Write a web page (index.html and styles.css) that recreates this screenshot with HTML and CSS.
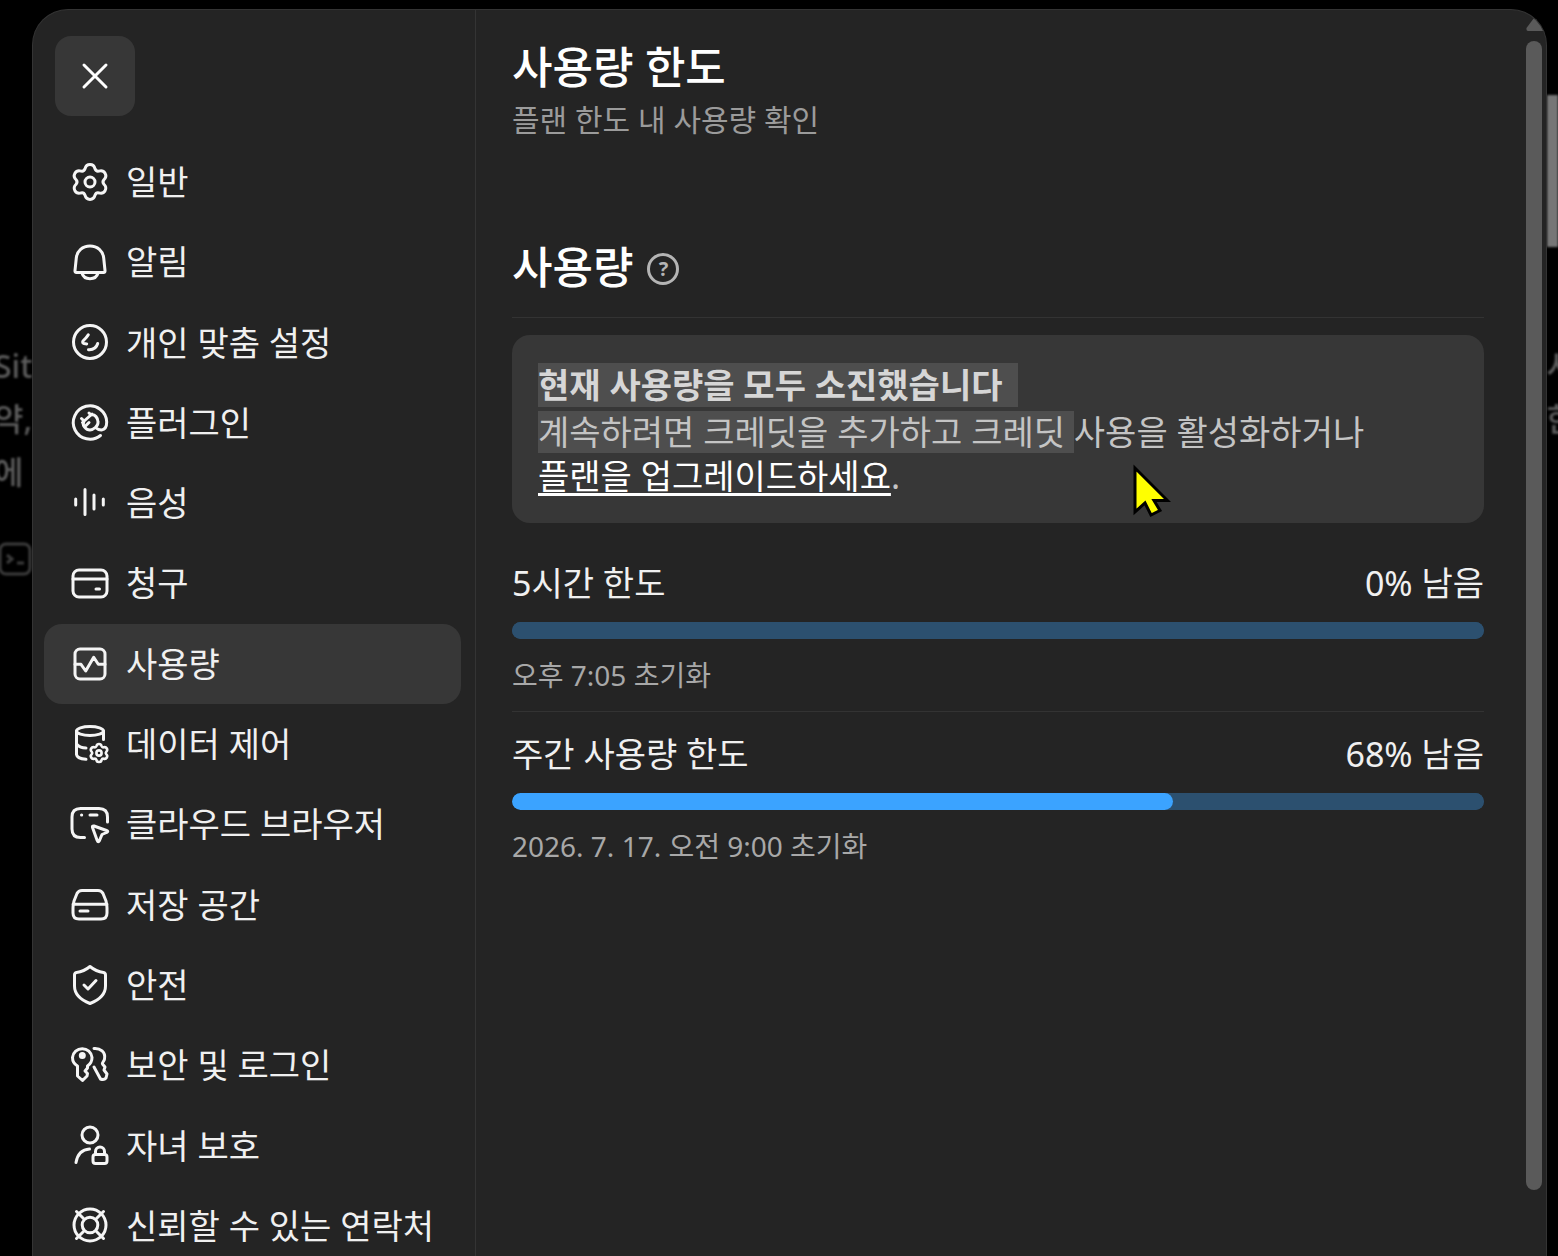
FILE: index.html
```html
<!DOCTYPE html>
<html lang="ko">
<head>
<meta charset="utf-8">
<meta name="viewport" content="width=device-width, initial-scale=1">
<title>사용량 한도</title>
<link rel="stylesheet" href="styles.css">
</head>
<body>
<div class="backdrop" aria-hidden="true">
  <div class="backdrop-left">
    <p>Sit</p><p>약,</p><p>에</p>
    <svg class="backdrop-icon" viewBox="0 0 34 34"><rect x="2" y="2" width="30" height="30" rx="6"/><path d="M9 13l5 4-5 4M19 21h7"/></svg>
  </div>
  <div class="backdrop-right"><p>사</p><p>한</p></div>
  <div class="backdrop-panel"></div>
</div>

<div class="dialog" role="dialog" aria-label="설정">
  <aside class="sidebar">
    <button class="close" type="button" aria-label="닫기">
      <svg class="close-icon" viewBox="0 0 28 28"><path d="M3 3L25 25M25 3L3 25"/></svg>
    </button>
    <nav class="nav">
      <a class="nav-item" href="#general">
        <svg class="icon" viewBox="-20 -20 40 40"><g id="gear"><path d="M-5-13.2C-3.6-18.8 3.6-18.8 5-13.2Q6-10.39 8.93-10.93C14.48-12.52 18.08-6.28 13.93-2.27Q12 0 13.93 2.27C18.08 6.28 14.48 12.52 8.93 10.93Q6 10.39 5 13.2C3.6 18.8-3.6 18.8-5 13.2Q-6 10.39-8.93 10.93C-14.48 12.52-18.08 6.28-13.93 2.27Q-12 0-13.93-2.27C-18.08-6.28-14.48-12.52-8.93-10.93Q-6-10.39-5-13.2Z"/><circle r="5"/></g></svg>
        <span>일반</span></a>
      <a class="nav-item" href="#notifications">
        <svg class="icon" viewBox="-20 -20 40 40"><path d="M0-16C-7.5-16-13-11-13.7-4L-15 8.5Q-15.200 10.500-13.500 10.500H13.500Q15.200 10.500 15 8.500L13.700-4C13-11 7.500-16 0-16ZM-8 11C-6 18.500 6 18.500 8 11"/></svg>
        <span>알림</span></a>
      <a class="nav-item" href="#personalization">
        <svg class="icon" viewBox="-20 -20 40 40"><circle cy="-1" r="16.5"/><path d="M-1.700-8.300C-3-6-5-4-7-2Q-8 0-6 .5L-3.300 .9M-1.500 6.700C3 7 6.500 4.500 7.700 .5"/></svg>
        <span>개인 맞춤 설정</span></a>
      <a class="nav-item" href="#plugins">
        <svg class="icon" viewBox="-20 -20 40 40"><path d="M10.500 12.500A16.700 16.700 0 1 1 16.700-1C16.700 4 15 6.500 11.500 7Q8 7 5.500 4.500M-7.500-.5L2-9M-6-2L-8.500-4.500M1-8L-1-10M-6-1.500C-8.500 2-4 7 0 7C3 7 8.500 3 8-1C8-5 5-9 1-8M-4 2.500L-1-.5"/></svg>
        <span>플러그인</span></a>
      <a class="nav-item" href="#voice">
        <svg class="icon" viewBox="-20 -20 40 40"><path d="M-14.300-4V2M-5-13.500V11.500M4-8V6M13.300-4V2"/></svg>
        <span>음성</span></a>
      <a class="nav-item" href="#billing">
        <svg class="icon" viewBox="-20 -20 40 40"><rect x="-17" y="-13" width="34" height="27" rx="6"/><path d="M-17-4H17M6 6H9.500"/></svg>
        <span>청구</span></a>
      <a class="nav-item active" href="#usage" aria-current="page">
        <svg class="icon" viewBox="-20 -20 40 40"><rect x="-15" y="-15" width="30" height="30" rx="5"/><path d="M-15 .3H-9L-4.300 7L3.700-6.700L8.300 .3H15"/></svg>
        <span>사용량</span></a>
      <a class="nav-item" href="#data">
        <svg class="icon" viewBox="-20 -20 40 40"><ellipse cy="-13" rx="13.500" ry="4.500"/><path d="M-13.500-13V10.500Q-13 14.500-4 15.300M13.500-13V-4.500M-13 .5Q-10 4-4 4"/><g class="gear-small"><use href="#gear" transform="translate(9 9) scale(.52)"/></g></svg>
        <span>데이터 제어</span></a>
      <a class="nav-item" href="#browser">
        <svg class="icon" viewBox="-20 -20 40 40"><path d="M17.500-2V-7Q17.500-15.500 9-15.500H-9.500Q-18-15.500-18-7V5Q-18 13.500-9.500 13.500H-5.500M-8.500-9H-8.300M0-9H7M2.500 3.500Q2 1.500 4 2L16.500 6.500Q19 7.500 16.500 8.500L12 10.500L9.500 16.500Q8.200 19 7.200 16.500Z"/></svg>
        <span>클라우드 브라우저</span></a>
      <a class="nav-item" href="#storage">
        <svg class="icon" viewBox="-20 -20 40 40"><path d="M-8-14.500H8Q11.500-14.500 13-11.500L16-4Q17 0 17 3V8Q17 14 11 14H-11Q-17 14-17 8V3Q-17 0-16-4L-13-11.500Q-11.500-14.500-8-14.500ZM-17-.7H17M-10 6H-2"/></svg>
        <span>저장 공간</span></a>
      <a class="nav-item" href="#safety">
        <svg class="icon" viewBox="-20 -20 40 40"><path d="M0-18.500Q6-13.500 13.500-12.500Q15.500-12 15.500-10V1C15.500 10 9 15 0 18.500C-9 15-15.500 10-15.500 1V-10Q-15.500-12-13.500-12.500Q-6-13.500 0-18.500ZM-6 0L-2 4L6-4.500"/></svg>
        <span>안전</span></a>
      <a class="nav-item" href="#security">
        <svg class="icon" viewBox="-20 -20 40 40"><path d="M-12.500 1C-16-1-17.500-4-17.500-7.500A9.800 9.800 0 0 1 2-7.500C2-4 .5-1-2.500 1L-2.500 3L-5 6L-2.500 8.500L-3 11L-7.500 15.500L-12.500 11ZM4-16.500C10-17 16-13 14.500-6C14.500-4 12-3 12.500-1L15 2L14 5L17 9L16 13Q14 15.500 10.500 14L4 2"/><circle class="fill" cx="-7.700" cy="-9.500" r="2"/></svg>
        <span>보안 및 로그인</span></a>
      <a class="nav-item" href="#family">
        <svg class="icon" viewBox="-20 -20 40 40"><circle cy="-11" r="8"/><path d="M-14 16.500C-12.500 8-8 3.500-.5 3M5.500 8V5.500A4.500 4.500 0 0 1 14.500 5.500V8"/><rect x="3" y="8.500" width="14" height="9" rx="2.500"/></svg>
        <span>자녀 보호</span></a>
      <a class="nav-item" href="#contacts">
        <svg class="icon" viewBox="-20 -20 40 40"><circle cy="-1" r="16"/><circle cy="-1" r="7.800"/><path d="M-6.500-7.500L-13.500-14.500M6.500-7.500L13.500-14.500M-6.500 5.500L-13.500 12.500M6.500 5.500L13.500 12.500"/></svg>
        <span>신뢰할 수 있는 연락처</span></a>
    </nav>
  </aside>

  <main class="content">
    <h1 class="title">사용량 한도</h1>
    <p class="subtitle">플랜 한도 내 사용량 확인</p>

    <div class="section-head">
      <h2 class="title">사용량</h2>
      <button class="help" type="button" aria-label="도움말">?</button>
    </div>

    <section class="notice">
      <h3 class="notice-title">현재 사용량을 모두 소진했습니다</h3>
      <p class="notice-text"><mark>계속하려면 크레딧을 추가하고 크레딧 </mark>사용을 활성화하거나<br><a href="#upgrade">플랜을 업그레이드하세요</a>.</p>
      <svg class="pointer" viewBox="0 0 38 54" aria-hidden="true"><path d="M2 4V48L12 39L18 51L27 46.500L21 36.500H34.500Z"/></svg>
    </section>

    <section class="limit">
      <div class="limit-row"><label for="limit-5h">5시간 한도</label><span>0% 남음</span></div>
      <progress id="limit-5h" class="bar" max="100" value="0"></progress>
      <p class="reset">오후 7:05 초기화</p>
    </section>
    <section class="limit">
      <div class="limit-row"><label for="limit-week">주간 사용량 한도</label><span>68% 남음</span></div>
      <progress id="limit-week" class="bar" max="100" value="68"></progress>
      <p class="reset">2026. 7. 17. 오전 9:00 초기화</p>
    </section>
  </main>

  <div class="scrollbar" aria-hidden="true">
    <svg class="scroll-arrow" viewBox="0 0 18 14"><path d="M8 1Q9 0 10 1L17.500 11Q18 14 16 14H2Q0 14 .5 11Z"/></svg>
    <div class="scroll-thumb"></div>
  </div>
</div>
</body>
</html>
```
FILE: styles.css
```css
* {
  box-sizing: border-box;
}

body,
h1,
h2,
h3,
p {
  margin: 0;
}

body {
  position: relative;
  height: 100vh;
  overflow: hidden;
  background: #000;
  color: #f0f0f0;
  font-family: "Noto Sans", "Noto Sans CJK KR", sans-serif;
  font-size: 34px;
  line-height: 48px;
}

button {
  padding: 0;
  border: 0;
  font: inherit;
  color: inherit;
}

/* Dimmed page behind the dialog */
.backdrop {
  position: absolute;
  inset: 0;
  overflow: hidden;
  color: #5c5c5c;
  font-size: 32px;
  font-weight: 500;
  line-height: 53px;
  white-space: nowrap;
}

.backdrop-left,
.backdrop-right {
  position: absolute;
  top: 339px;
  filter: blur(1px);
}

.backdrop-left {
  left: -6px;
}

.backdrop-right {
  right: -18px;
}

.backdrop-icon {
  display: block;
  width: 34px;
  height: 34px;
  margin: 44px 0 0 4px;
  fill: none;
  stroke: #3c3c3c;
  stroke-width: 3;
}

.backdrop-panel {
  position: absolute;
  top: 95px;
  right: 0;
  width: 11px;
  height: 152px;
  background: #767676;
  filter: blur(1px);
}

/* Dialog */
.dialog {
  position: relative;
  display: grid;
  grid-template-columns: 443px 1fr 20px;
  grid-template-rows: 100%;
  height: calc(100vh - 9px);
  margin: 9px 11px 0 32px;
  overflow: hidden;
  border: 1px solid #343434;
  border-bottom: 0;
  border-radius: 36px 36px 0 0;
  background: #242424;
}

.sidebar {
  padding: 26px 14px 0 11px;
  border-right: 1px solid #343434;
}

.close {
  display: flex;
  align-items: center;
  justify-content: center;
  width: 80px;
  height: 80px;
  margin: 0 0 26px 11px;
  border-radius: 16px;
  background: #373737;
}

.close-icon {
  width: 28px;
  height: 28px;
  fill: none;
  stroke: #fff;
  stroke-width: 3;
  stroke-linecap: round;
}

.nav {
  display: grid;
  grid-auto-rows: 80px;
  align-content: space-between;
  min-height: 1124px;
}

.nav-item {
  display: flex;
  align-items: center;
  gap: 16px;
  padding-left: 26px;
  border-radius: 18px;
  color: inherit;
  text-decoration: none;
  white-space: nowrap;
}

.nav-item.active {
  background: #373737;
}

.icon {
  flex: none;
  width: 40px;
  height: 40px;
  overflow: visible;
  fill: none;
  stroke: #f5f5f5;
  stroke-width: 3;
  stroke-linecap: round;
  stroke-linejoin: round;
}

.icon .fill {
  fill: #f5f5f5;
}

.gear-small {
  stroke-width: 5;
}

/* Content */
.content {
  padding: 29px 42px 0 36px;
}

.title {
  color: #fff;
  font-size: 44px;
  font-weight: 500;
  line-height: 56px;
}

.subtitle {
  margin-top: 5px;
  color: #9b9b9b;
  font-size: 30px;
  line-height: 40px;
}

.section-head {
  display: flex;
  align-items: center;
  gap: 14px;
  margin: 99px 0 17px;
  padding-bottom: 22px;
  border-bottom: 1px solid #333;
}

.help {
  width: 32px;
  height: 32px;
  margin-top: 3px;
  border: 3px solid #b4b4b4;
  border-radius: 50%;
  background: none;
  color: #b4b4b4;
  font-size: 20px;
  font-weight: 700;
  line-height: 24px;
}

.notice {
  position: relative;
  padding: 28px 26px 25px;
  border-radius: 18px;
  background: #373737;
  color: #c4c4c4;
  line-height: 44px;
}

.notice-title {
  width: fit-content;
  margin-bottom: 3px;
  padding-right: 16px;
  background: #4e4e4e;
  color: #d6d6d6;
  font-size: 34px;
  font-weight: 700;
}

.notice-text mark {
  display: inline-block;
  background: #4e4e4e;
  color: inherit;
  line-height: 42px;
  white-space: pre;
}

.notice-text a {
  color: #fff;
  text-decoration-thickness: 3px;
  text-underline-offset: 4px;
  text-decoration-skip-ink: none;
}

.pointer {
  position: absolute;
  top: 129px;
  left: 621px;
  width: 38px;
  height: 54px;
  fill: #ff0;
  stroke: #000;
  stroke-width: 3;
}

.limit {
  padding: 18px 0 16px;
}

.notice + .limit {
  padding-top: 36px;
  border-bottom: 1px solid #333;
}

.limit-row {
  display: flex;
  justify-content: space-between;
}

.bar {
  display: block;
  width: 100%;
  height: 17px;
  margin: 15px 0 16px;
  overflow: hidden;
  appearance: none;
  border: 0;
  border-radius: 9px;
  background: #2c506f;
}

.bar::-webkit-progress-bar {
  border-radius: 9px;
  background: #2c506f;
}

.bar::-webkit-progress-value {
  border-radius: 9px;
  background: #3ba3ff;
}

.reset {
  color: #a8a8a8;
  font-size: 28px;
  line-height: 40px;
}

/* Scrollbar */
.scrollbar {
  display: flex;
  flex-direction: column;
  align-items: flex-start;
  gap: 10px;
  padding: 7px 0 66px;
}

.scroll-arrow {
  width: 18px;
  height: 14px;
  fill: #5a5a5a;
}

.scroll-thumb {
  flex: 1;
  width: 16px;
  border-radius: 8px;
  background: #5a5a5a;
}
```
